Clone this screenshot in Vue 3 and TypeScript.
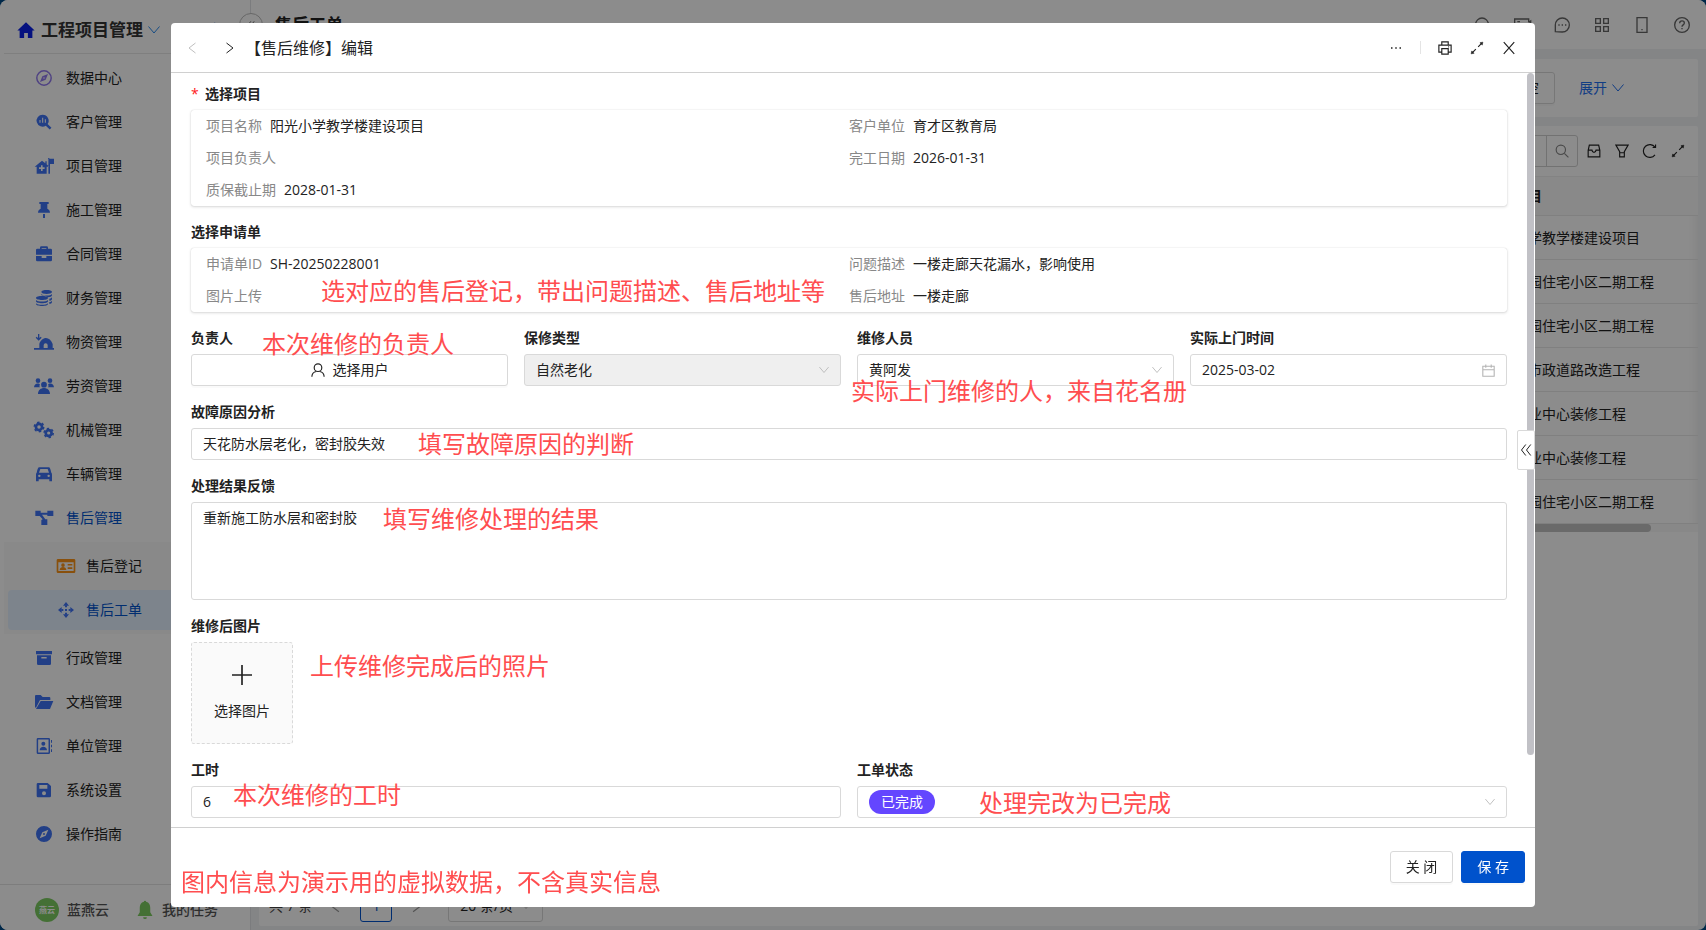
<script setup lang="ts">
import { h, ref } from 'vue'

const glyphs: Record<string, string> = {
  home: '<path fill="currentColor" d="M12 1.5 23.5 12.5H20.5V22.5H14.5V16H9.5V22.5H3.5V12.5H.5Z"/>',
  compass: '<circle cx="12" cy="12" r="10.8" fill="none" stroke="currentColor" stroke-width="2.2"/><path fill="currentColor" fill-rule="evenodd" d="M18 6 14.5 14.5 6 18 9.5 9.5ZM12 10.8a1.2 1.2 0 1 0 0 2.4 1.2 1.2 0 0 0 0-2.4Z"/>',
  customer: '<path fill="currentColor" fill-rule="evenodd" d="M10 1a9 9 0 0 1 7.4 14.1l5.800 5.700-2.600 2.600-5.900-5.800A9 9 0 1 1 10 1ZM5.200 9v4h1.600V9ZM9.200 5.500v7.500h1.600V5.500ZM13.200 8v5h1.600V8Z"/>',
  project: '<path fill="currentColor" fill-rule="evenodd" d="M9 4-2 13h3v10.500h15V13H20L16 9.500V5h-2v3ZM7.500 11h2.400v3h3v2.400h-3v3H7.500v-3h-3V14h3ZM18 0h2v1h7v8h-6v14.500h-2.400V2Z"/>',
  pin: '<path fill="currentColor" d="M5 0h14v3h-2v7c2.500 1 4 3 4 6H3c0-3 1.500-5 4-6V3H5ZM10.500 18h3v6h-3Z"/>',
  bag: '<path fill="currentColor" fill-rule="evenodd" d="M6 4V2.500A2 2 0 0 1 8 .500h8a2 2 0 0 1 2 2V4h4a2 2 0 0 1 2 2v7H0V6a2 2 0 0 1 2-2ZM8.500 3v1h7V3ZM0 15h8.500v3h7v-3H24v6a2 2 0 0 1-2 2H2a2 2 0 0 1-2-2Z"/>',
  coins: '<path fill="currentColor" d="M8 3c0-4 16-4 16 0s-16 4-16 0ZM8 6c3 3 13 3 16 0v2c0 2-3 3-6 3C16 9 12 8 8 8ZM20 13c2 0 3-1 4-2v2c0 2-2 3-4 3ZM20 18c2 0 3-1 4-2v2c0 2-2 3-4 3ZM0 12c0-4 18-4 18 0s-18 4-18 0ZM0 15c3 3 15 3 18 0v2c0 4-18 4-18 0ZM0 20c3 3 15 3 18 0v1c0 4-18 4-18 0Z"/>',
  material: '<path fill="currentColor" fill-rule="evenodd" d="M3 0h2v6l2-2 1.500 1.500L4 10-.500 5.500 1 4l2 2ZM-3 21h8v-6c1-5 6-9 10-9s8 3 10 9v6h2v2.500H-3ZM11.500 21h6v-4a3 3 0 0 0-6 0Z"/>',
  people: '<g fill="currentColor"><circle cx="3" cy="4" r="3.500"/><circle cx="21" cy="4" r="3.500"/><circle cx="12" cy="10" r="4.300"/><path d="M-3 14c0-7 8-7 9-4-1 1-1 3 0 4ZM27 14c0-7-8-7-9-4 1 1 1 3 0 4ZM3 24c0-12 18-12 18 0Z"/></g>',
  gears: '<g fill="none" stroke="currentColor"><circle cx="4.500" cy="7.500" r="4.600" stroke-width="4"/><circle cx="4.500" cy="7.500" r="7" stroke-width="2.400" stroke-dasharray="3.600 3.700"/><circle cx="19" cy="16.500" r="4.400" stroke-width="4"/><circle cx="19" cy="16.500" r="6.800" stroke-width="2.400" stroke-dasharray="3.500 3.600"/></g>',
  car: '<path fill="currentColor" fill-rule="evenodd" d="M5 2h14c2 0 2.500 2 4 8 1 1 1 2 1 4v9h-4v-3H4v3H0v-9c0-2 0-3 1-4C2.500 4 3 2 5 2ZM6.500 4.500 4.500 10h15l-2-5.500ZM5 13a1.800 1.800 0 1 0 0 3.600A1.800 1.800 0 0 0 5 13ZM19 13a1.800 1.800 0 1 0 0 3.600 1.800 1.800 0 0 0 0-3.600Z"/>',
  flow: '<path fill="currentColor" d="M-1 1h8v3h10V1h9v8h-9V7H9l5 7h3v8.500H8V15l2-1L5.500 9H-1Z"/>',
  idcard: '<path fill="currentColor" fill-rule="evenodd" d="M0 1.500h24a2 2 0 0 1 2 2v17a2 2 0 0 1-2 2H0a2 2 0 0 1-2-2v-17a2 2 0 0 1 2-2ZM.500 6.500v13h23v-13ZM7.500 8a2.700 2.700 0 1 1 0 5.400 2.700 2.700 0 0 1 0-5.400ZM2.500 18c0-6 10-6 10 0ZM14.500 9h7v2.400h-7ZM14.500 14h7v2.400h-7Z"/>',
  move: '<g fill="currentColor"><path d="M12 0l4.500 5.500h-9ZM12 24l4.500-5.500h-9ZM0 12l5.500-4.500v9ZM24 12l-5.500-4.500v9Z"/><path d="M10.500 5h3v3h-3ZM10.500 16h3v3h-3ZM5 10.500h3v3H5ZM16 10.500h3v3h-3ZM10.500 10.500h3v3h-3Z"/></g>',
  archive: '<path fill="currentColor" fill-rule="evenodd" d="M0 1.500h24v5H0ZM1.500 8h21v12.500a2 2 0 0 1-2 2h-17a2 2 0 0 1-2-2ZM8 10.500v2.400h8v-2.400Z"/>',
  folder: '<path fill="currentColor" d="M0 1.500h7l3 3h10a1.500 1.500 0 0 1 1.500 1.500v3H6L0 20.500-1.500 20V3A1.500 1.500 0 0 1 0 1.500ZM7 10.500h19l-5 12H0Z"/>',
  contact: '<path fill="currentColor" fill-rule="evenodd" d="M3 0h16a2 2 0 0 1 2 2v20a2 2 0 0 1-2 2H3a2 2 0 0 1-2-2V2a2 2 0 0 1 2-2ZM3.200 2.200v19.600h15.600V2.200ZM11 5.500a3 3 0 1 1 0 6 3 3 0 0 1 0-6ZM5.500 18.500c0-7 11-7 11 0ZM22.500 3h1.500v4h-1.500ZM22.500 10h1.500v4h-1.500ZM22.500 17h1.500v4h-1.500Z"/>',
  save: '<path fill="currentColor" fill-rule="evenodd" d="M3 1.500h14.500L22.500 6v15a2 2 0 0 1-2 2H3a2 2 0 0 1-2-2V3.500a2 2 0 0 1 2-2ZM5 4.500V10h12V4.500ZM12 14a3 3 0 1 0 0 6 3 3 0 0 0 0-6Z"/>',
  guide: '<path fill="currentColor" fill-rule="evenodd" d="M12 0a12 12 0 1 1 0 24 12 12 0 0 1 0-24ZM18.500 5.500 9.500 9.500 5.500 18.500 14.500 14.500ZM12 10.500a1.500 1.500 0 1 1 0 3 1.500 1.500 0 0 1 0-3Z"/>',
  bell: '<path fill="currentColor" d="M10.500 1a1.500 1.500 0 0 1 3 0c4 1 5.500 4 5.500 8v6l3 5H2l3-5V9c0-4 1.500-7 5.500-8ZM9.500 21.500h5a2.500 2.500 0 0 1-5 0Z"/>',
}
const lines: Record<string, string> = {
  down: '<path d="M1 5l11 13L23 5"/>',
  left: '<path d="M17 2 4 12l13 10"/>',
  right: '<path d="M7 2l13 10L7 22"/>',
  doubleLeft: '<path d="M11.500 1 3 12l8.500 11M21.500 1 13 12l8.500 11"/>',
  search: '<circle cx="10" cy="10" r="8"/><path d="M16 16l7 7"/>',
  lens: '<circle cx="12" cy="11" r="9.500"/><path d="M18 18l5 5"/>',
  video: '<path d="M22 8V3H1v18h21v-5M22 8l3-2v12l-3-2M5 7h4"/>',
  message: '<path d="M2 22V12a10.500 10.500 0 1 1 10.500 10.500Z"/><path stroke-width="2.600" d="M6.500 12h2M11.500 12h2M16.500 12h2"/>',
  grid: '<path d="M2.500 2.500h7v7h-7ZM14.500 2.500h7v7h-7ZM2.500 14.500h7v7h-7ZM14.500 14.500h7v7h-7Z"/>',
  phone: '<path d="M4.500 1h15v22h-15ZM11 19h2"/>',
  help: '<circle cx="12" cy="12" r="11"/><path d="M8.500 9.500c0-5 7-4.500 7-.500 0 3-3.500 2.500-3.500 5.500M12 16.500v2"/>',
  more: '<path stroke-width="2.600" d="M2 12h3M10.500 12h3M19 12h3"/>',
  printer: '<path d="M6.500 7V1.500h11V7M6 19H1.500V7h21v12H18M6.500 13h11v9.500h-11ZM17.500 10h1.500"/>',
  expand: '<path d="M14 10l5-5M10 14l-5 5"/><path fill="currentColor" stroke-width="1" d="M17 3l5-1-1 5ZM7 21l-5 1 1-5Z"/>',
  close: '<path d="M3 2l18 20M21 2 3 22"/>',
  inbox: '<path d="M4 2h16l2 9v11H2V11ZM2 10.500h6.500c.500 5 6.500 5 7 0H22"/>',
  filter: '<path d="M1.500 2h21L16 13v9H8v-9ZM8 15h8"/>',
  reload: '<path d="M20.500 18.500a11 11 0 1 1 0-13M21.500 1v5h-5"/>',
  user: '<circle cx="12" cy="8" r="6.500"/><path d="M1.500 23.500c0-4 3-8 7.500-9M22.500 23.500c0-4-3-8-7.500-9"/>',
  calendar: '<path d="M1.500 4h21v18.500h-21ZM1.500 10.500h21M7 1v6M17 1v6"/>',
  plus: '<path d="M12 0v24M0 12h24"/>',
}
const Icon = (props: { name: string }) =>
  h('svg', {
    viewBox: '0 0 24 24',
    class: 'icon',
    'aria-hidden': 'true',
    ...(lines[props.name] ? { fill: 'none', stroke: 'currentColor', 'stroke-width': 2 } : {}),
    innerHTML: lines[props.name] ?? glyphs[props.name],
  })
Icon.props = ['name']

interface MenuItem { icon: string; label: string; tone?: string; children?: MenuItem[]; active?: boolean }
const menu: MenuItem[] = [
  { icon: 'compass', label: '数据中心', tone: 'violet' },
  { icon: 'customer', label: '客户管理' },
  { icon: 'project', label: '项目管理' },
  { icon: 'pin', label: '施工管理' },
  { icon: 'bag', label: '合同管理' },
  { icon: 'coins', label: '财务管理' },
  { icon: 'material', label: '物资管理' },
  { icon: 'people', label: '劳资管理' },
  { icon: 'gears', label: '机械管理' },
  { icon: 'car', label: '车辆管理' },
  {
    icon: 'flow', label: '售后管理', active: true,
    children: [
      { icon: 'idcard', label: '售后登记', tone: 'orange' },
      { icon: 'move', label: '售后工单', active: true },
    ],
  },
  { icon: 'archive', label: '行政管理' },
  { icon: 'folder', label: '文档管理' },
  { icon: 'contact', label: '单位管理' },
  { icon: 'save', label: '系统设置' },
  { icon: 'guide', label: '操作指南' },
]
const topTools = [
  ['lens', '搜索'], ['video', '视频'], ['message', '消息'],
  ['grid', '应用'], ['phone', '手机端'], ['help', '帮助'],
]
const rows = [
  '阳光小学教学楼建设项目', '阳光花园住宅小区二期工程', '阳光花园住宅小区二期工程', '滨海新市政道路改造工程',
  '城南商业中心装修工程', '城南商业中心装修工程', '阳光花园住宅小区二期工程',
]
const project = [
  ['项目名称', '阳光小学教学楼建设项目'], ['客户单位', '育才区教育局'],
  ['项目负责人', ''], ['完工日期', '2026-01-31'], ['质保截止期', '2028-01-31'],
]
const request = [
  ['申请单ID', 'SH-20250228001'], ['问题描述', '一楼走廊天花漏水，影响使用'],
  ['图片上传', ''], ['售后地址', '一楼走廊'],
]
const kind = ref('自然老化')
const worker = ref('黄阿发')
const visit = ref('2025-03-02')
const cause = ref('天花防水层老化，密封胶失效')
const result = ref('重新施工防水层和密封胶')
const hours = ref('6')
const status = ref('已完成')
</script>

<template>
  <div class="page">
    <aside class="sidebar">
      <div class="brand">
        <Icon name="home" class="brand-home" />
        <span>工程项目管理</span>
        <Icon name="down" class="brand-down" />
        <Icon name="search" class="brand-search" />
      </div>
      <nav class="menu">
        <template v-for="item in menu" :key="item.label">
          <a href="#" class="menu-item" :class="{ current: item.active }">
            <Icon :name="item.icon" class="menu-icon" :class="item.tone" />{{ item.label }}
          </a>
          <div v-if="item.children" class="submenu">
            <a v-for="sub in item.children" :key="sub.label" href="#" class="menu-item sub" :class="{ current: sub.active, selected: sub.active }">
              <Icon :name="sub.icon" class="menu-icon" :class="sub.tone" />{{ sub.label }}
            </a>
          </div>
        </template>
      </nav>
      <div class="account">
        <span class="avatar">燕云</span><span>蓝燕云</span>
        <Icon name="bell" class="bell" /><span>我的任务</span>
      </div>
    </aside>

    <div class="main">
      <header class="topbar">
        <button class="collapse" aria-label="收起菜单"><Icon name="doubleLeft" /></button>
        <h1>售后工单</h1>
        <div class="top-tools">
          <button v-for="[icon, label] in topTools" :key="icon" :aria-label="label"><Icon :name="icon" /></button>
        </div>
      </header>
      <div class="content">
        <section class="panel filters">
          <button class="btn">清 空</button>
          <a href="#" class="unfold">展开<Icon name="down" /></a>
        </section>
        <section class="panel list">
          <div class="toolbar">
            <div class="search-box">
              <input aria-label="搜索" />
              <button aria-label="搜索"><Icon name="search" /></button>
            </div>
            <button aria-label="归档"><Icon name="inbox" /></button>
            <button aria-label="筛选"><Icon name="filter" /></button>
            <button aria-label="刷新"><Icon name="reload" /></button>
            <button aria-label="全屏"><Icon name="expand" /></button>
          </div>
          <table>
            <thead><tr><th></th><th class="col-project">选择项目</th></tr></thead>
            <tbody><tr v-for="(row, i) in rows" :key="i"><td></td><td>{{ row }}</td></tr></tbody>
          </table>
          <div class="h-track"><div class="h-thumb"></div></div>
          <div class="pager">
            <span>共 7 条</span>
            <button class="pager-arrow" aria-label="上一页"><Icon name="left" /></button>
            <button class="pager-num">1</button>
            <button class="pager-arrow" aria-label="下一页"><Icon name="right" /></button>
            <div class="control page-size">
              <select aria-label="每页条数"><option>20 条/页</option></select><Icon name="down" />
            </div>
          </div>
        </section>
      </div>
    </div>
  </div>

  <div class="mask">
    <div class="modal" role="dialog" aria-labelledby="dialog-title">
      <header class="modal-head">
        <button class="prev" aria-label="上一条"><Icon name="left" /></button>
        <button class="next" aria-label="下一条"><Icon name="right" /></button>
        <h2 id="dialog-title">【售后维修】编辑</h2>
        <button aria-label="更多"><Icon name="more" /></button>
        <i class="divider"></i>
        <button aria-label="打印"><Icon name="printer" /></button>
        <button aria-label="全屏"><Icon name="expand" /></button>
        <button aria-label="关闭窗口"><Icon name="close" /></button>
      </header>

      <div class="modal-main">
        <form class="modal-body" @submit.prevent>
          <div class="field">
            <div class="label"><b class="required">*</b>选择项目</div>
            <dl class="card">
              <div v-for="[k, v] in project" :key="k"><dt>{{ k }}</dt><dd>{{ v }}</dd></div>
            </dl>
          </div>
          <div class="field">
            <div class="label">选择申请单</div>
            <dl class="card">
              <div v-for="[k, v] in request" :key="k"><dt>{{ k }}</dt><dd>{{ v }}</dd></div>
            </dl>
            <span class="note note-request">选对应的售后登记，带出问题描述、售后地址等</span>
          </div>
          <div class="columns four">
            <div class="field">
              <div class="label">负责人</div>
              <button type="button" class="btn pick-user"><Icon name="user" />选择用户</button>
              <span class="note note-owner">本次维修的负责人</span>
            </div>
            <div class="field">
              <label class="label" for="kind">保修类型</label>
              <div class="control disabled">
                <select id="kind" v-model="kind" disabled><option>自然老化</option></select><Icon name="down" />
              </div>
            </div>
            <div class="field">
              <label class="label" for="worker">维修人员</label>
              <div class="control">
                <select id="worker" v-model="worker"><option>黄阿发</option></select><Icon name="down" />
              </div>
              <span class="note note-worker">实际上门维修的人，来自花名册</span>
            </div>
            <div class="field">
              <label class="label" for="visit">实际上门时间</label>
              <div class="control"><input id="visit" v-model="visit" /><Icon name="calendar" class="icon-date" /></div>
            </div>
          </div>
          <div class="field">
            <label class="label" for="cause">故障原因分析</label>
            <div class="control"><input id="cause" v-model="cause" /></div>
            <span class="note note-cause">填写故障原因的判断</span>
          </div>
          <div class="field">
            <label class="label" for="result">处理结果反馈</label>
            <textarea id="result" v-model="result"></textarea>
            <span class="note note-result">填写维修处理的结果</span>
          </div>
          <div class="field">
            <div class="label">维修后图片</div>
            <button type="button" class="upload"><Icon name="plus" />选择图片</button>
            <span class="note note-photo">上传维修完成后的照片</span>
          </div>
          <div class="columns two">
            <div class="field">
              <label class="label" for="hours">工时</label>
              <div class="control"><input id="hours" v-model="hours" /></div>
              <span class="note note-hours">本次维修的工时</span>
            </div>
            <div class="field">
              <label class="label" for="status">工单状态</label>
              <div class="control">
                <select id="status" v-model="status" class="tag"><option>已完成</option></select><Icon name="down" />
              </div>
              <span class="note note-status">处理完改为已完成</span>
            </div>
          </div>
        </form>
        <div class="v-thumb"></div>
        <button class="drawer" aria-label="展开侧栏"><Icon name="doubleLeft" /></button>
      </div>

      <footer class="modal-foot">
        <span class="note note-foot">图内信息为演示用的虚拟数据，不含真实信息</span>
        <button class="btn">关 闭</button>
        <button class="btn primary">保 存</button>
      </footer>
    </div>
  </div>
</template>

<style>
html { background: #004a86; }
body { margin: 0; overflow: hidden; }
#app, #app button, #app input, #app select, #app textarea {
  font-family: "Open Sans", "Noto Sans CJK SC", sans-serif;
  font-size: 14px;
  line-height: 22px;
}
</style>

<style scoped>
* { box-sizing: border-box; }
button { padding: 0; border: 0; background: none; color: inherit; display: flex; align-items: center; justify-content: center; }
a { color: inherit; text-decoration: none; }
h1, h2, dl, dd { margin: 0; }
.icon { width: 14px; height: 14px; flex: none; overflow: visible; display: block; }

.page { display: flex; height: 100vh; border-radius: 8px; overflow: hidden; background: #f0f2f5; color: #222; }
.sidebar { width: 251px; flex: none; display: flex; flex-direction: column; background: #fff; border-right: 1px solid #e0e2e6; }
.brand { display: flex; align-items: center; height: 54px; margin-left: 4px; padding: 6px 0 0 13px; border-bottom: 1px solid #e8e8e8; font-size: 17px; font-weight: 700; color: #333; }
.brand-home { width: 18px; height: 18px; margin-right: 6px; color: #0a20e8; }
.brand-down { width: 12px; height: 12px; margin-left: 5px; color: #2a8cf0; }
.brand-search { width: 16px; height: 16px; margin-left: 48px; color: #0052cc; }
.menu { flex: 1; display: flex; flex-direction: column; gap: 4px; padding: 4px 0 0 4px; }
.menu-item { display: flex; align-items: center; gap: 14px; height: 40px; padding-left: 32px; }
.menu-icon { width: 16px; height: 16px; color: #3f74f5; }
.submenu { display: flex; flex-direction: column; gap: 4px; padding: 4px 0 4px 4px; background: #fafafa; }
.sub { padding-left: 50px; gap: 12px; border-radius: 4px; }
.selected { background: #e4f1ff; }
.current { color: #0052cc; }
.violet { color: #9078ee; }
.orange { color: #fa9316; }
.account { display: flex; align-items: center; height: 46px; padding: 4px 0 0 35px; border-top: 1px solid #e4e4e4; color: #555; font-weight: 500; }
.avatar { display: flex; align-items: center; justify-content: center; width: 24px; height: 24px; margin-right: 8px; border-radius: 50%; background: #7dcc62; color: #fff; font-size: 8px; font-weight: 700; }
.bell { width: 18px; height: 20px; margin: 0 8px 0 27px; color: #7dcc62; }

.main { flex: 1; min-width: 0; display: flex; flex-direction: column; }
.topbar { display: flex; align-items: center; height: 49px; padding-right: 16px; background: #fff; }
.collapse { width: 24px; height: 24px; margin-left: -12px; border: 1px solid #bbb; border-radius: 50%; background: #fff; z-index: 1; }
.collapse .icon { width: 8px; height: 8px; }
h1 { flex: 1; margin-left: 12px; font-size: 17px; line-height: 24px; font-weight: 700; }
.top-tools { display: flex; gap: 24px; color: #666; }
.top-tools .icon { width: 16px; height: 16px; }
.content { flex: 1; display: flex; flex-direction: column; gap: 9px; padding: 10px 8px 4px; }
.panel { background: #fff; border-radius: 2px; }
.filters { display: flex; align-items: center; justify-content: flex-end; gap: 24px; height: 58px; padding-right: 74px; }
.unfold { display: flex; align-items: center; gap: 5px; color: #1f6ff0; }
.unfold .icon { width: 12px; height: 12px; }
.btn { height: 32px; padding: 0 15px; border: 1px solid #d9d9d9; border-radius: 3px; background: #fff; color: #222; box-shadow: 0 2px 0 #00000005; }
.list { flex: 1; display: flex; flex-direction: column; }
.toolbar { display: flex; align-items: center; justify-content: flex-end; gap: 14px; height: 50px; padding-right: 13px; }
.search-box { display: flex; width: 220px; height: 32px; margin-right: -5px; border: 1px solid #d0d0d0; border-radius: 3px; overflow: hidden; }
.search-box input { flex: 1; min-width: 0; border: 0; outline: 0; }
.search-box button { width: 31px; border-left: 1px solid #d0d0d0; color: #888; }
table { width: 100%; border-collapse: collapse; table-layout: fixed; box-shadow: inset -10px 0 8px -8px #00000012; }
th { height: 39px; padding: 0 8px; background: #fafafa; border-bottom: 1px solid #eaeaea; border-top: 1px solid #eee; text-align: left; font-weight: 700; }
td { height: 44px; padding: 0 8px; border-bottom: 1px solid #eaeaea; }
.col-project { width: 220px; }
.h-track { height: 8px; background: #f7f7f7; }
.h-thumb { height: 8px; margin-right: 47px; border-radius: 4px; background: #c1c1c1; }
.pager { display: flex; align-items: center; margin-top: auto; padding: 0 0 4px 10px; color: #444; }
.pager-arrow { width: 32px; height: 32px; margin: 0 8px; color: #999; }
.pager-num { width: 32px; height: 32px; border: 1px solid #0052cc; border-radius: 3px; background: #fff; color: #0052cc; }
.pager-arrow:last-of-type { margin-right: 16px; }
.page-size { width: 95px; }

.mask { position: fixed; inset: 0; z-index: 10; padding: 23px 171px; background: #00000073; }
.modal { display: flex; flex-direction: column; height: 100%; border-radius: 4px; background: #fff; color: #222; overflow: hidden; }
.modal-head { display: flex; align-items: center; height: 50px; padding: 0 10px 0 6px; border-bottom: 1px solid #d0d0d0; }
.modal-head button { width: 32px; height: 32px; }
.modal-head .prev { color: #bfbfbf; }
.modal-head .next { margin-left: 4px; }
.modal-head .prev .icon, .modal-head .next .icon, .modal-head [aria-label="更多"] .icon { width: 12px; height: 12px; }
h2 { flex: 1; font-size: 16px; line-height: 24px; font-weight: 400; }
.divider { width: 1px; height: 13px; margin: 0 8px; background: #e4e4e4; }
.modal-main { position: relative; flex: 1; min-height: 0; }
.modal-body { height: 100%; overflow-y: auto; scrollbar-width: none; padding: 10px 28px 24px 20px; }
.v-thumb { position: absolute; top: 0; right: 1px; width: 7px; height: 682px; max-height: 100%; border-radius: 4px; background: #c1c1c6; }
.drawer { position: absolute; top: calc(50% - 20px); right: 0; width: 18px; height: 40px; border: 1px solid #d9d9d9; border-radius: 2px; background: #fff; }
.drawer .icon { width: 12px; height: 12px; }
.field { position: relative; margin-bottom: 15px; }
.label { display: block; margin-bottom: 5px; font-weight: 700; }
.required { display: inline-block; width: 14px; color: #ff2020; font-weight: 400; }
.card { display: grid; grid-template-columns: 1fr 1fr; padding: 0 15px; border-radius: 3px; box-shadow: 0 0 1px #00000033, 0 1px 3px #00000026; }
.card div { display: flex; gap: 8px; height: 32px; align-items: center; }
dt { color: #888; }
.columns { display: grid; gap: 16px; }
.four { grid-template-columns: repeat(4, 1fr); }
.two { grid-template-columns: repeat(2, 1fr); }
.columns .field { min-width: 0; }
.control { display: flex; align-items: center; height: 32px; border: 1px solid #d9d9d9; border-radius: 3px; padding-right: 11px; background: #fff; color: #b4b4b4; }
.control .icon { width: 10px; height: 10px; pointer-events: none; }
.control .icon-date { width: 13px; height: 13px; }
.control input, .control select { flex: 1; min-width: 0; height: 30px; margin: 0; padding: 0 0 0 11px; border: 0; outline: 0; appearance: none; background: none; color: #222; opacity: 1; }
.control input { padding-bottom: 2px; }
.disabled { background: #efefef; }
.control .tag { flex: none; height: 24px; margin: 0 auto 0 11px; padding: 0 12px; border-radius: 12px; background: #6446ff; color: #fff; }
.pick-user { width: 100%; gap: 8px; }
textarea { display: block; width: 100%; height: 98px; padding: 4px 11px; border: 1px solid #d9d9d9; border-radius: 3px; outline: 0; resize: none; color: #222; }
.upload { flex-direction: column; gap: 15px; width: 102px; height: 102px; border: 1px dashed #d9d9d9; border-radius: 3px; background: #fafafa; }
.upload .icon { width: 20px; height: 20px; }
.modal-foot { position: relative; display: flex; align-items: center; justify-content: flex-end; gap: 8px; height: 80px; padding: 0 10px 2px 0; border-top: 1px solid #d0d0d0; }
.primary { border-color: #0052cc; background: #0052cc; color: #fff; }

.note { position: absolute; font-size: 24px; line-height: 32px; color: #ff4d4f; white-space: nowrap; pointer-events: none; z-index: 1; }
.note-request { left: 130px; top: 54px; }
.note-owner { left: 71px; top: 1px; }
.note-worker { left: -6px; top: 48px; }
.note-cause { left: 227px; top: 27px; }
.note-result { left: 192px; top: 28px; }
.note-photo { left: 119px; top: 35px; }
.note-hours { left: 42px; top: 20px; }
.note-status { left: 122px; top: 28px; }
.note-foot { left: 10px; top: 38px; }
</style>
